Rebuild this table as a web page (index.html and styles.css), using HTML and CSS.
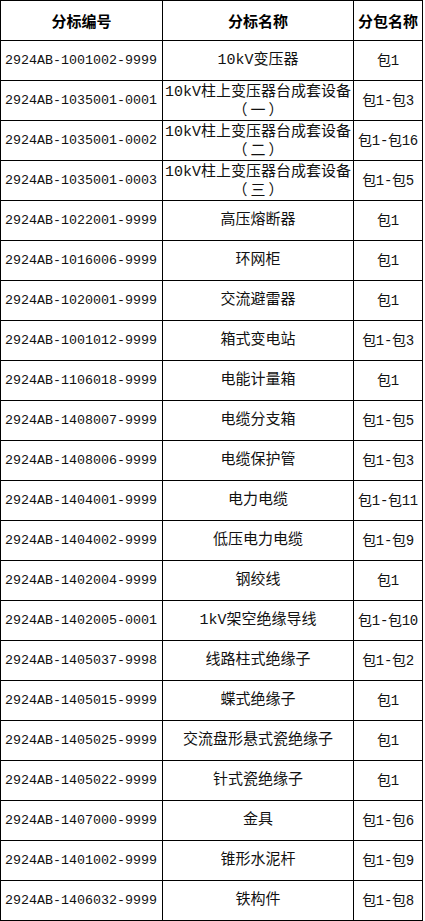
FILE: index.html
```html
<!DOCTYPE html>
<html lang="zh-CN">
<head>
<meta charset="utf-8">
<title>分标表</title>
<link rel="stylesheet" href="styles.css">
</head>
<body>
<table class="bid-table">
  <colgroup>
    <col class="c-code">
    <col class="c-name">
    <col class="c-pkg">
  </colgroup>
  <thead>
    <tr><th>分标编号</th><th>分标名称</th><th>分包名称</th></tr>
  </thead>
  <tbody>
    <tr><td class="code">2924AB-1001002-9999</td><td class="name">10kV变压器</td><td class="pkg">包1</td></tr>
    <tr><td class="code">2924AB-1035001-0001</td><td class="name two"><div class="line">10kV柱上变压器台成套设备</div><div class="line paren">（一）</div></td><td class="pkg">包1-包3</td></tr>
    <tr><td class="code">2924AB-1035001-0002</td><td class="name two"><div class="line">10kV柱上变压器台成套设备</div><div class="line paren">（二）</div></td><td class="pkg">包1-包16</td></tr>
    <tr><td class="code">2924AB-1035001-0003</td><td class="name two"><div class="line">10kV柱上变压器台成套设备</div><div class="line paren">（三）</div></td><td class="pkg">包1-包5</td></tr>
    <tr><td class="code">2924AB-1022001-9999</td><td class="name">高压熔断器</td><td class="pkg">包1</td></tr>
    <tr><td class="code">2924AB-1016006-9999</td><td class="name">环网柜</td><td class="pkg">包1</td></tr>
    <tr><td class="code">2924AB-1020001-9999</td><td class="name">交流避雷器</td><td class="pkg">包1</td></tr>
    <tr><td class="code">2924AB-1001012-9999</td><td class="name">箱式变电站</td><td class="pkg">包1-包3</td></tr>
    <tr><td class="code">2924AB-1106018-9999</td><td class="name">电能计量箱</td><td class="pkg">包1</td></tr>
    <tr><td class="code">2924AB-1408007-9999</td><td class="name">电缆分支箱</td><td class="pkg">包1-包5</td></tr>
    <tr><td class="code">2924AB-1408006-9999</td><td class="name">电缆保护管</td><td class="pkg">包1-包3</td></tr>
    <tr><td class="code">2924AB-1404001-9999</td><td class="name">电力电缆</td><td class="pkg">包1-包11</td></tr>
    <tr><td class="code">2924AB-1404002-9999</td><td class="name">低压电力电缆</td><td class="pkg">包1-包9</td></tr>
    <tr><td class="code">2924AB-1402004-9999</td><td class="name">钢绞线</td><td class="pkg">包1</td></tr>
    <tr><td class="code">2924AB-1402005-0001</td><td class="name">1kV架空绝缘导线</td><td class="pkg">包1-包10</td></tr>
    <tr><td class="code">2924AB-1405037-9998</td><td class="name">线路柱式绝缘子</td><td class="pkg">包1-包2</td></tr>
    <tr><td class="code">2924AB-1405015-9999</td><td class="name">蝶式绝缘子</td><td class="pkg">包1</td></tr>
    <tr><td class="code">2924AB-1405025-9999</td><td class="name">交流盘形悬式瓷绝缘子</td><td class="pkg">包1</td></tr>
    <tr><td class="code">2924AB-1405022-9999</td><td class="name">针式瓷绝缘子</td><td class="pkg">包1</td></tr>
    <tr><td class="code">2924AB-1407000-9999</td><td class="name">金具</td><td class="pkg">包1-包6</td></tr>
    <tr><td class="code">2924AB-1401002-9999</td><td class="name">锥形水泥杆</td><td class="pkg">包1-包9</td></tr>
    <tr><td class="code">2924AB-1406032-9999</td><td class="name">铁构件</td><td class="pkg">包1-包8</td></tr>
  </tbody>
</table>
</body>
</html>
```

FILE: styles.css
```css
html, body {
  margin: 0;
  padding: 0;
  background: #ffffff;
}

.bid-table {
  border-collapse: collapse;
  table-layout: fixed;
  width: 422px;
  color: #000;
  font-family: "Liberation Mono", "Noto Sans CJK SC", monospace;
  font-size: 15px;
}

.c-code { width: 162px; }
.c-name { width: 191px; }
.c-pkg { width: 69px; }

.bid-table th,
.bid-table td {
  border: 1px solid #000;
  padding: 0;
  height: 39px;
  vertical-align: middle;
  white-space: nowrap;
  overflow: hidden;
}

.bid-table th {
  font-family: "Noto Sans CJK SC", sans-serif;
  font-weight: bold;
  font-size: 15px;
  text-align: center;
  line-height: 20px;
}

.code {
  font-size: 13.33px;
  padding-left: 4px !important;
  text-align: left;
  color: #111;
}

.name,
.pkg {
  text-align: center;
  line-height: 20px;
  color: #111;
}

.name.two .line {
  height: 16px;
  line-height: 16px;
}

.paren {
  font-family: "Noto Sans CJK SC", sans-serif;
  font-feature-settings: "halt" 0, "chws" 0;
  text-spacing-trim: space-all;
  letter-spacing: 3px;
  padding-left: 3px;
}

.pkg {
  font-size: 14px;
  letter-spacing: -0.3px;
}
```
